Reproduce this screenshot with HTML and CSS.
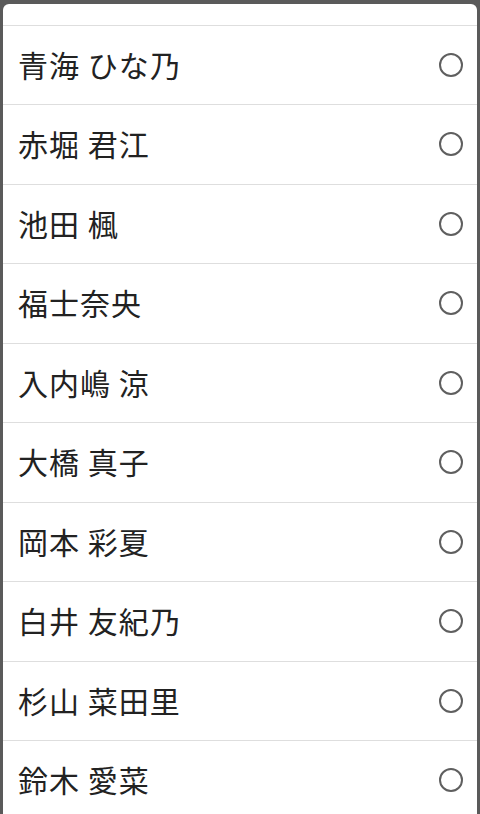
FILE: index.html
```html
<!DOCTYPE html>
<html lang="ja">
<head>
<meta charset="UTF-8">
<meta name="viewport" content="width=device-width, initial-scale=1.0">
<title>メンバー選択</title>
<link rel="stylesheet" href="styles.css">
</head>
<body>
<div class="dialog">
  <ul class="choices">
    <li class="choice choice-cut"></li>
    <li class="choice"><span class="name">青海 ひな乃</span><span class="radio"></span></li>
    <li class="choice"><span class="name">赤堀 君江</span><span class="radio"></span></li>
    <li class="choice"><span class="name">池田 楓</span><span class="radio"></span></li>
    <li class="choice"><span class="name">福士奈央</span><span class="radio"></span></li>
    <li class="choice"><span class="name">入内嶋 涼</span><span class="radio"></span></li>
    <li class="choice"><span class="name">大橋 真子</span><span class="radio"></span></li>
    <li class="choice"><span class="name">岡本 彩夏</span><span class="radio"></span></li>
    <li class="choice"><span class="name">白井 友紀乃</span><span class="radio"></span></li>
    <li class="choice"><span class="name">杉山 菜田里</span><span class="radio"></span></li>
    <li class="choice"><span class="name">鈴木 愛菜</span><span class="radio"></span></li>
  </ul>
</div>
</body>
</html>
```

FILE: styles.css
```css
html, body {
  height: 100%;
}

body {
  margin: 0;
  background-color: #5a5a5a;
  font-family: "Noto Sans CJK JP", "Noto Sans", sans-serif;
  overflow: hidden;
}

.dialog {
  margin: 4px 3px 0;
  height: calc(100% - 4px);
  background-color: #fff;
  border-radius: 6px 6px 0 0;
  overflow: hidden;
}

.choices {
  list-style: none;
  margin: 0;
  padding: 0;
}

.choice {
  box-sizing: border-box;
  height: 79.5px;
  display: flex;
  align-items: center;
  justify-content: space-between;
  padding: 0 14px 2px 15px;
  border-bottom: 1px solid #dedede;
}

.choice-cut {
  height: 21.5px;
}

.name {
  font-size: 30px;
  color: #222;
  letter-spacing: 1px;
}

.radio {
  box-sizing: border-box;
  width: 24px;
  height: 24px;
  margin-top: 2px;
  border: 2px solid #5f5f5f;
  border-radius: 50%;
}
```
